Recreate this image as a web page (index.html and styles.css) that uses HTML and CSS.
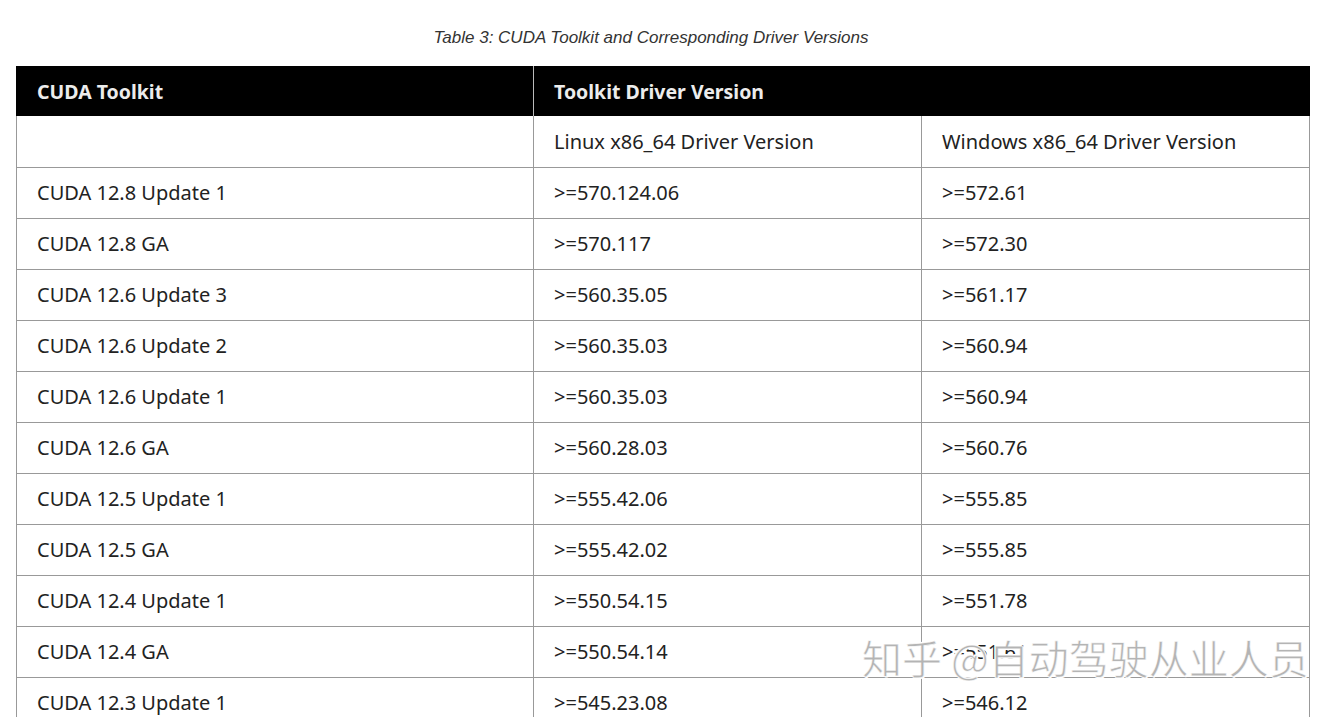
FILE: index.html
```html
<!DOCTYPE html>
<html>
<head>
<meta charset="utf-8">
<link rel="stylesheet" href="styles.css">
</head>
<body>
<div class="page">
  <p class="caption">Table 3: CUDA Toolkit and Corresponding Driver Versions</p>
  <table class="drivers">
    <colgroup>
      <col class="c1"><col class="c2"><col class="c3">
    </colgroup>
    <thead>
      <tr><th>CUDA Toolkit</th><th colspan="2">Toolkit Driver Version</th></tr>
    </thead>
    <tbody>
      <tr><td></td><td>Linux x86_64 Driver Version</td><td>Windows x86_64 Driver Version</td></tr>
      <tr><td>CUDA 12.8 Update 1</td><td>&gt;=570.124.06</td><td>&gt;=572.61</td></tr>
      <tr><td>CUDA 12.8 GA</td><td>&gt;=570.117</td><td>&gt;=572.30</td></tr>
      <tr><td>CUDA 12.6 Update 3</td><td>&gt;=560.35.05</td><td>&gt;=561.17</td></tr>
      <tr><td>CUDA 12.6 Update 2</td><td>&gt;=560.35.03</td><td>&gt;=560.94</td></tr>
      <tr><td>CUDA 12.6 Update 1</td><td>&gt;=560.35.03</td><td>&gt;=560.94</td></tr>
      <tr><td>CUDA 12.6 GA</td><td>&gt;=560.28.03</td><td>&gt;=560.76</td></tr>
      <tr><td>CUDA 12.5 Update 1</td><td>&gt;=555.42.06</td><td>&gt;=555.85</td></tr>
      <tr><td>CUDA 12.5 GA</td><td>&gt;=555.42.02</td><td>&gt;=555.85</td></tr>
      <tr><td>CUDA 12.4 Update 1</td><td>&gt;=550.54.15</td><td>&gt;=551.78</td></tr>
      <tr><td>CUDA 12.4 GA</td><td>&gt;=550.54.14</td><td>&gt;=551.61</td></tr>
      <tr><td>CUDA 12.3 Update 1</td><td>&gt;=545.23.08</td><td>&gt;=546.12</td></tr>
    </tbody>
  </table>
  <div class="watermark">知乎 @自动驾驶从业人员</div>
</div>
</body>
</html>
```
FILE: styles.css
```css
html, body {
  margin: 0;
  padding: 0;
  background: #fff;
}
.page {
  position: relative;
  padding: 0 0 0 16px;
  height: 717px;
  overflow: hidden;
}
.caption {
  margin: 0;
  padding: 28px 0 18px 0;
  width: 1270px;
  text-align: center;
  font-family: "Liberation Sans", Arial, sans-serif;
  font-style: italic;
  font-size: 17px;
  line-height: 20px;
  color: #333;
}
.drivers {
  border-collapse: collapse;
  width: 1293px;
  table-layout: fixed;
  font-family: "Noto Sans", sans-serif;
  font-size: 20px;
  color: #222;
}
.c1 { width: 517px; }
.c2 { width: 388px; }
.c3 { width: 388px; }
.drivers th {
  background: #000;
  color: #ececec;
  font-weight: 700;
  font-size: 19.5px;
  text-align: left;
  height: 50px;
  padding: 0 20px;
  box-sizing: border-box;
  border-left: 1px solid #bbb;
}
.drivers th:first-child {
  border-left: 1px solid #000;
}
.drivers td {
  height: 51px;
  padding: 0 20px;
  box-sizing: border-box;
  border: 1px solid #999;
  border-top: none;
  font-weight: 400;
}
.watermark {
  position: absolute;
  left: 862px;
  top: 632px;
  font-family: "Noto Sans CJK SC", sans-serif;
  font-size: 40px;
  line-height: 50px;
  color: rgba(160, 160, 160, 0.8);
  -webkit-text-stroke: 1px rgba(255,255,255,0.8);
  text-shadow: 1px 1px 0 #fff, -1px -1px 0 #fff;
  white-space: nowrap;
}
```
